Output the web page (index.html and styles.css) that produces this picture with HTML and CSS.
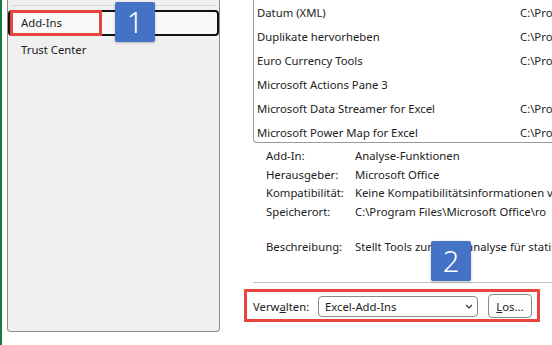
FILE: index.html
```html
<!DOCTYPE html>
<html lang="de">
<head>
  <meta charset="UTF-8">
  <title>Excel-Optionen – Add-Ins</title>
  <link rel="stylesheet" href="styles.css">
</head>
<body>
  <div class="window">
    <nav class="nav">
      <div class="nav-sep"></div>
      <div class="nav-item active">
        Add-Ins
        <span class="mark mark-nav"></span>
      </div>
      <div class="nav-item">Trust Center</div>
      <span class="badge badge-1">1</span>
    </nav>

    <main class="main">
      <div class="addin-list">
        <div class="addin-row"><span class="addin-name">Datum (XML)</span><span class="addin-path">C:\Pro</span></div>
        <div class="addin-row"><span class="addin-name">Duplikate hervorheben</span><span class="addin-path">C:\Pro</span></div>
        <div class="addin-row"><span class="addin-name">Euro Currency Tools</span><span class="addin-path">C:\Pro</span></div>
        <div class="addin-row"><span class="addin-name">Microsoft Actions Pane 3</span><span class="addin-path"></span></div>
        <div class="addin-row"><span class="addin-name">Microsoft Data Streamer for Excel</span><span class="addin-path">C:\Pro</span></div>
        <div class="addin-row"><span class="addin-name">Microsoft Power Map for Excel</span><span class="addin-path">C:\Pro</span></div>
      </div>

      <div class="details">
        <div class="detail-row"><span class="detail-label">Add-In:</span><span class="detail-value">Analyse-Funktionen</span></div>
        <div class="detail-row"><span class="detail-label">Herausgeber:</span><span class="detail-value">Microsoft Office</span></div>
        <div class="detail-row"><span class="detail-label">Kompatibilität:</span><span class="detail-value">Keine Kompatibilitätsinformationen v</span></div>
        <div class="detail-row"><span class="detail-label">Speicherort:</span><span class="detail-value">C:\Program Files\Microsoft Office\ro</span></div>
        <div class="detail-row detail-desc"><span class="detail-label">Beschreibung:</span><span class="detail-value">Stellt Tools zur Datenanalyse für statis</span></div>
      </div>

      <div class="sep"></div>

      <div class="manage">
        <span class="manage-label">Verw<u>a</u>lten:</span>
        <div class="select">
          <span>Excel-Add-Ins</span>
          <svg class="chevron" viewBox="0 0 8 5" width="8" height="5"><polyline points="1,1 4,4 7,1" fill="none" stroke="#333" stroke-width="1.1"/></svg>
        </div>
        <button class="btn"><u>L</u>os...</button>
        <span class="mark mark-manage"></span>
      </div>
      <span class="badge badge-2">2</span>
    </main>
  </div>
</body>
</html>
```

FILE: styles.css
```css
body {
  margin: 0;
  background: #fff;
  font-family: "Noto Sans", "Open Sans", sans-serif;
  font-size: 11.3px;
  color: #222;
  overflow: hidden;
}
.window {
  display: flex;
  height: 345px;
  border-left: 2px solid #107c41;
}

/* left navigation */
.nav {
  position: relative;
  width: 211px;
  margin: 0 0 13px 5px;
  padding-top: 5px;
  background: #f0f0f0;
  border: 1px solid #8d8d8d;
  border-top: none;
  border-radius: 0 0 4px 4px;
}
.nav-sep {
  height: 1px;
  margin: 0 3px 4px 3px;
  background: #d9d9d9;
}
.nav-item {
  position: relative;
  height: 26px;
  line-height: 28px;
  padding-left: 13px;
}
.nav-item.active {
  box-sizing: border-box;
  padding-left: 11px;
  line-height: 22px;
  background: #f9f9f9;
  border: 2px solid #111;
  border-radius: 4px;
}

/* red annotation frames */
.mark {
  position: absolute;
  border: 3px solid #e8453c;
  pointer-events: none;
}
.mark-nav {
  left: 0;
  top: -2px;
  width: 86px;
  height: 20px;
}
.mark-manage {
  left: -9px;
  top: 1px;
  width: 290px;
  height: 27px;
}

/* numbered badges */
.badge {
  position: absolute;
  width: 40px;
  height: 40px;
  background: #4472c4;
  color: #fff;
  font-size: 29px;
  font-weight: 300;
  line-height: 40px;
  text-align: center;
  border-radius: 2px;
  box-shadow: 0 1px 3px rgba(0, 0, 0, 0.25);
}
.badge-1 {
  left: 107px;
  top: 2px;
}
.badge-2 {
  left: 178px;
  top: 241px;
}

/* right side */
.main {
  position: relative;
  flex: 1;
  margin-left: 33px;
  min-width: 0;
}
.addin-list {
  height: 141px;
  padding-top: 1px;
  border-left: 1px solid #9a9a9a;
  border-bottom: 1px solid #9a9a9a;
  border-radius: 0 0 0 4px;
  overflow: hidden;
}
.addin-row {
  display: flex;
  height: 24px;
  line-height: 24px;
  white-space: nowrap;
}
.addin-name {
  width: 263px;
  flex: none;
  padding-left: 3px;
}
.details {
  padding: 4px 0 0 13px;
}
.detail-row {
  display: flex;
  height: 18.5px;
  line-height: 18.5px;
  white-space: nowrap;
}
.detail-desc {
  margin-top: 16.5px;
}
.detail-label {
  width: 89px;
  flex: none;
}
.sep {
  height: 1px;
  margin-top: 26px;
  background: #c4c4c4;
}
.manage {
  position: relative;
  display: flex;
  align-items: center;
  height: 36px;
  margin-top: 5px;
}
.manage-label {
  width: 65px;
}
.select {
  box-sizing: border-box;
  display: flex;
  align-items: center;
  justify-content: space-between;
  width: 160px;
  height: 21px;
  padding: 0 4px 0 6px;
  border: 1px solid #8a8a8a;
  border-radius: 4px;
}
.btn {
  box-sizing: border-box;
  width: 44px;
  height: 24px;
  margin-left: 10px;
  padding: 0;
  font: inherit;
  color: inherit;
  background: #fdfdfd;
  border: 1px solid #8a8a8a;
  border-radius: 4px;
}
```
